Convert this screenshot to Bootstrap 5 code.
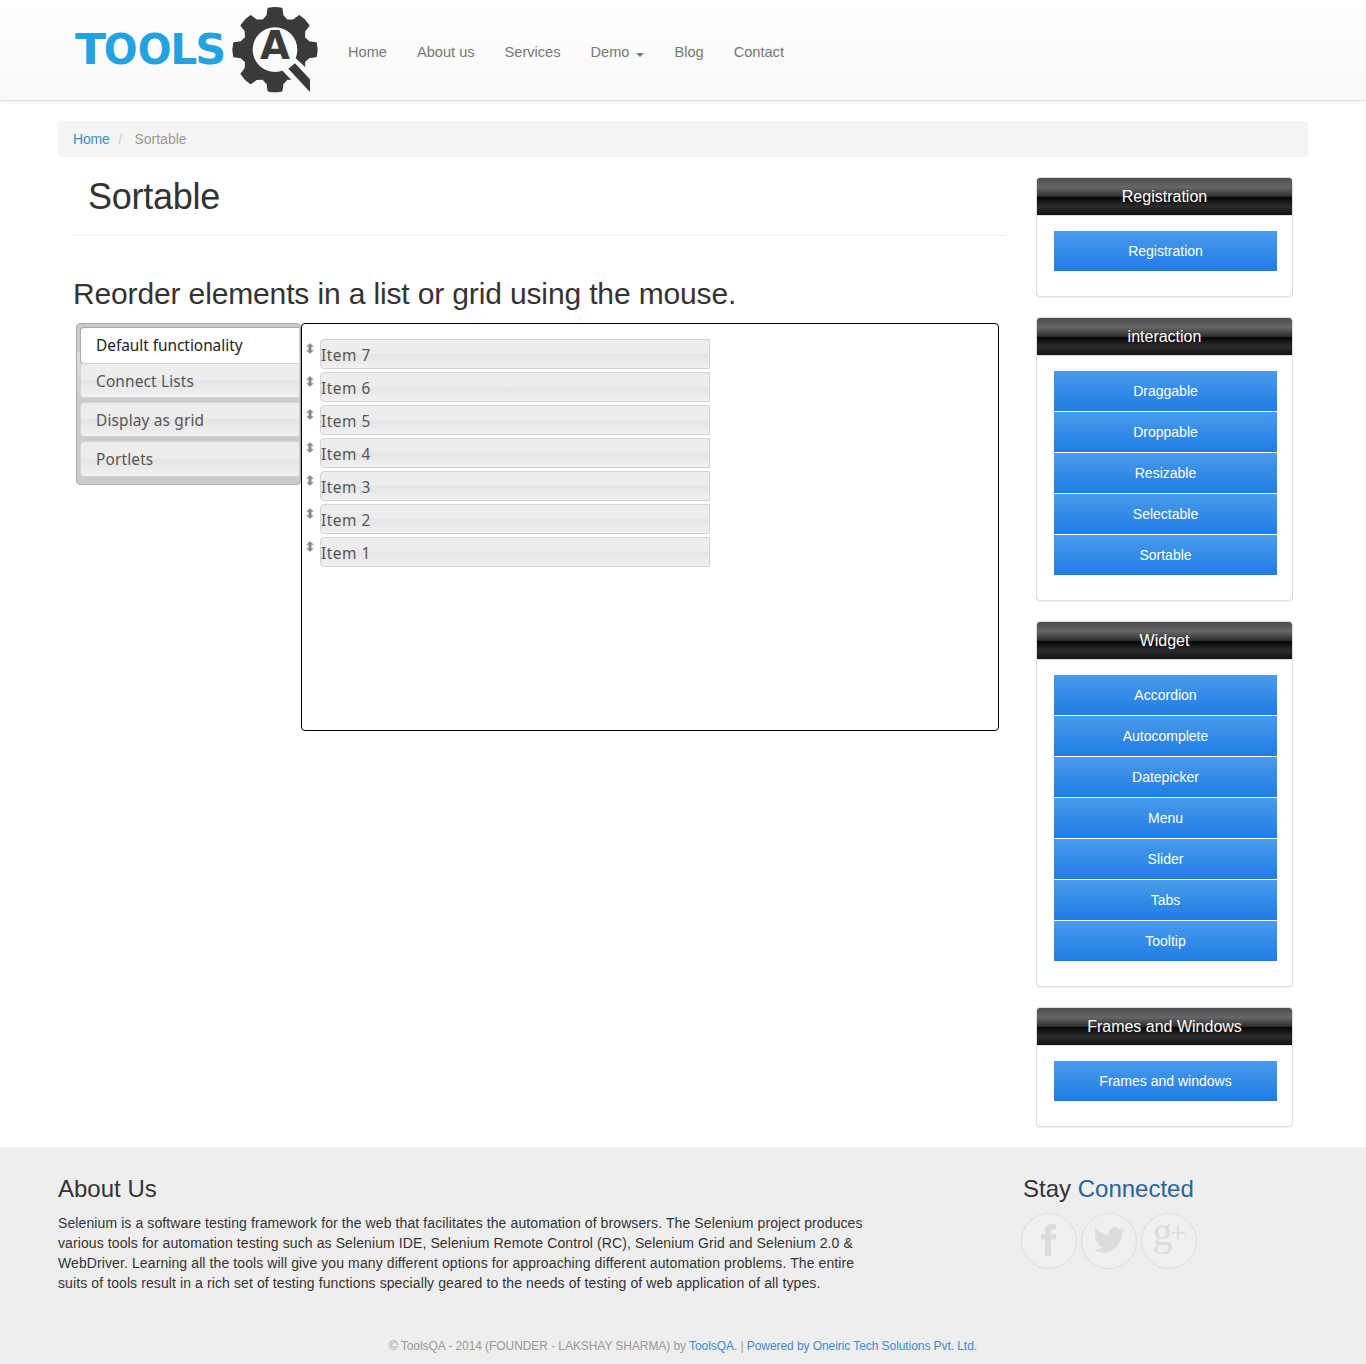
<!DOCTYPE html>
<html lang="en">
<head>
<meta charset="utf-8">
<meta name="viewport" content="width=device-width, initial-scale=1">
<title>Sortable | ToolsQA</title>
<link rel="stylesheet" href="https://cdn.jsdelivr.net/npm/bootstrap@5.3.0/dist/css/bootstrap.min.css">
<style>
body{font-family:"Liberation Sans",Arial,sans-serif;font-size:14px;line-height:20px;color:#333;background:#fff}
a{text-decoration:none;color:#428bca}
.site-head{height:101px;padding:0;background:linear-gradient(#fff,#f8f8f8);border-bottom:1px solid #e4e4e4;box-shadow:0 1px 4px rgba(0,0,0,.08);align-items:flex-start}
.site-head .navbar-brand{margin:0 0 0 60px;padding:0}
.site-head .navbar-brand svg{display:block}
.site-head .navbar-nav{padding-top:42px;gap:30px;margin-left:8px}
.site-head .nav-link{padding:0!important;font-size:14.6px;line-height:20px;color:#777}
.site-head .dropdown-toggle::after{border-top:4px solid;border-left:4px solid transparent;border-right:4px solid transparent;margin-left:7px;vertical-align:0}
.page-wrap{width:1250px;margin:20px auto 0}
.crumbs{height:36px;background:#f4f4f4;border-radius:4px;padding:8px 15px;margin:0}
.crumbs .breadcrumb-item:first-child{letter-spacing:-.2px}
.crumbs .breadcrumb-item.active{color:#999;padding-left:9px}
.crumbs .breadcrumb-item.active::before{color:#ccc;padding-right:12px}
.main-col{width:933px;margin-left:15px}
.main-col h1{font-size:36px;line-height:40px;margin:20px 0 0 15px;height:58px;letter-spacing:-.25px}
.main-col h2{font-size:30px;line-height:36px;margin:0;height:47px;letter-spacing:-.14px}
.title-rule{border-top:1px solid #eee;margin-bottom:40px}
.demo-row{margin-left:3px}
.demo-tabs{width:225px;height:162px;border:1px solid #aaa;border-radius:4px;padding:3px 1px 0 3px;background:linear-gradient(#cbcbcb 0,#cbcbcb 28px,#dedede 29px,#ccc 75px,#cbcbcb);font-family:"Noto Sans",Verdana,sans-serif;font-size:15.4px}
.demo-tabs .nav-link{height:35px;margin-bottom:4px;padding:0 0 0 15px;border-radius:4px 0 0 4px;border:1px solid #d3d3d3;border-right:0;color:#555;background:linear-gradient(#ededed 0,#ededed 48%,#e4e4e4 50%,#f1f1f1);letter-spacing:.16px;line-height:36px}
.demo-tabs .nav-link.active{height:37px;margin-bottom:-1px;color:#212121;background:#fff;border-color:#aaa;letter-spacing:-.02px}
.demo-tabs .nav-link:last-child{height:36px}
.demo-panel{width:698px;height:408px;border:1px solid #000;border-radius:4px;padding:15px 0 0 3px;font-family:"Noto Sans",Verdana,sans-serif;font-size:15.4px;letter-spacing:.55px}
.sort-list{gap:3px;width:405px}
.sort-row{height:30px;gap:5px}
.sort-row svg{margin-top:4px;flex:none}
.sort-item{flex:1;height:30px;padding:0;border:1px solid #d3d3d3;border-radius:4px 0 0 4px;line-height:32px;color:#555;background:linear-gradient(#ededed 0,#ededed 48%,#e4e4e4 50%,#f1f1f1);overflow:hidden}
.side-col{width:257px;margin:20px 15px 0 0;gap:20px}
.side-col .card{border:1px solid #ddd;border-radius:4px;box-shadow:0 1px 1px rgba(0,0,0,.05);height:auto}
.side-col .card-header{height:38px;padding:0;text-align:center;color:#fff;font-size:16px;line-height:38px;border-bottom:1px solid #ddd;border-radius:3px 3px 0 0;background:linear-gradient(#4c4c4c 0,#595959 12%,#666 25%,#474747 39%,#2c2c2c 50%,#000 51%,#111 60%,#2b2b2b 76%,#1c1c1c 91%,#131313 100%)}
.side-col .card-body{padding:15px 15px 25px 17px}
.side-col .list-group{gap:1px;border-radius:0}
.side-col .list-group-item{border:0;height:40px;padding:0;line-height:40px;text-align:center;color:#fff;background:linear-gradient(#499bea,#207ce5)}
.site-foot{margin-top:20px;height:217px;background:#eee}
.site-foot h3{font-size:24px;line-height:26px;margin:0;padding-top:29px}
.foot-inner{width:1250px;margin:0 auto;height:189px}
.about{width:965px}
.about p{width:820px;margin:11px 0 0;letter-spacing:.1px;white-space:nowrap}
.connected{color:#2a6496}
.social{gap:4px;margin:11px 0 0 -2px}
.social svg{display:block;overflow:visible}
.copyright{font-size:12px;line-height:20px;color:#999;text-align:center;margin:0;white-space:nowrap;letter-spacing:-.07px}
</style>
</head>
<body>
<nav class="navbar navbar-expand site-head">
  <a class="navbar-brand" href="#">
    <svg width="280" height="100" viewBox="0 0 840 300" role="img">
      <g fill="#22a2df" font-family="'DejaVu Sans Condensed','DejaVu Sans',sans-serif" font-weight="700" font-size="126">
        <text y="192" transform="translate(45 0) scale(1.2 1)">T</text>
        <text y="192" transform="translate(131 0) scale(1.05 1)">O</text>
        <text y="192" transform="translate(233 0) scale(1.05 1)">O</text>
        <text y="192" transform="translate(331 0) scale(1.12 1)">L</text>
        <text y="192" transform="translate(406 0) scale(1.14 1)">S</text>
      </g>
      <defs>
        <path id="tooth" d="M625 26Q645 21 665 26L668 47L680 60H610L622 47Z"/>
        <mask id="lens" maskUnits="userSpaceOnUse" x="500" y="0" width="300" height="300">
          <rect x="500" width="300" height="300" fill="#fff"/>
          <circle cx="645" cy="149" r="67" fill="#000"/>
          <path d="M666 211L694 240L762 312L800 265L738 203L706 174Z" fill="#000"/>
        </mask>
      </defs>
      <g fill="#3a3a38" stroke="#3a3a38" stroke-width="5" stroke-linejoin="round" mask="url(#lens)">
        <circle cx="645" cy="149" r="93"/>
        <use href="#tooth"/><use href="#tooth" transform="rotate(45 645 149)"/><use href="#tooth" transform="rotate(90 645 149)"/><use href="#tooth" transform="rotate(135 645 149)"/><use href="#tooth" transform="rotate(180 645 149)"/><use href="#tooth" transform="rotate(225 645 149)"/><use href="#tooth" transform="rotate(270 645 149)"/><use href="#tooth" transform="rotate(315 645 149)"/>
      </g>
      <path d="M705 190L750 238V276L685 206Z" fill="#3a3a38"/>
      <text x="645" y="177" text-anchor="middle" font-family="DejaVu Sans,sans-serif" font-weight="700" font-size="116" fill="#3a3a38">A</text>
    </svg>
  </a>
  <div class="navbar-nav">
    <a class="nav-link" href="#">Home</a>
    <a class="nav-link" href="#">About us</a>
    <a class="nav-link" href="#">Services</a>
    <a class="nav-link dropdown-toggle" href="#">Demo</a>
    <a class="nav-link" href="#">Blog</a>
    <a class="nav-link" href="#">Contact</a>
  </div>
</nav>

<div class="page-wrap">
  <ol class="breadcrumb crumbs">
    <li class="breadcrumb-item"><a href="#">Home</a></li>
    <li class="breadcrumb-item active">Sortable</li>
  </ol>
  <div class="d-flex justify-content-between align-items-start">
    <main class="main-col">
      <h1 class="fw-normal">Sortable</h1>
      <div class="title-rule"></div>
      <h2 class="fw-normal text-nowrap">Reorder elements in a list or grid using the mouse.</h2>
      <div class="demo-row d-flex align-items-start">
        <div class="nav flex-column flex-nowrap demo-tabs">
          <a class="nav-link active" href="#">Default functionality</a>
          <a class="nav-link" href="#">Connect Lists</a>
          <a class="nav-link" href="#">Display as grid</a>
          <a class="nav-link" href="#">Portlets</a>
        </div>
        <div class="demo-panel">
          <svg class="d-none"><symbol id="updown" viewBox="0 0 10 11"><path d="M5 .5L8.300 3.600H6.200V7.400H8.300L5 10.500L1.700 7.400H3.800V3.600H1.700Z" fill="#888" stroke="#888" stroke-width=".5"/></symbol></svg>
          <div class="d-flex flex-column sort-list">
            <div class="d-flex sort-row"><svg width="10" height="11"><use href="#updown"/></svg><div class="sort-item">Item 7</div></div>
            <div class="d-flex sort-row"><svg width="10" height="11"><use href="#updown"/></svg><div class="sort-item">Item 6</div></div>
            <div class="d-flex sort-row"><svg width="10" height="11"><use href="#updown"/></svg><div class="sort-item">Item 5</div></div>
            <div class="d-flex sort-row"><svg width="10" height="11"><use href="#updown"/></svg><div class="sort-item">Item 4</div></div>
            <div class="d-flex sort-row"><svg width="10" height="11"><use href="#updown"/></svg><div class="sort-item">Item 3</div></div>
            <div class="d-flex sort-row"><svg width="10" height="11"><use href="#updown"/></svg><div class="sort-item">Item 2</div></div>
            <div class="d-flex sort-row"><svg width="10" height="11"><use href="#updown"/></svg><div class="sort-item">Item 1</div></div>
          </div>
        </div>
      </div>
    </main>
    <aside class="side-col d-flex flex-column">
      <div class="card"><div class="card-header">Registration</div><div class="card-body"><div class="list-group">
        <a class="list-group-item" href="#">Registration</a></div></div></div>
      <div class="card"><div class="card-header">interaction</div><div class="card-body"><div class="list-group">
        <a class="list-group-item" href="#">Draggable</a><a class="list-group-item" href="#">Droppable</a><a class="list-group-item" href="#">Resizable</a><a class="list-group-item" href="#">Selectable</a><a class="list-group-item" href="#">Sortable</a></div></div></div>
      <div class="card"><div class="card-header">Widget</div><div class="card-body"><div class="list-group">
        <a class="list-group-item" href="#">Accordion</a><a class="list-group-item" href="#">Autocomplete</a><a class="list-group-item" href="#">Datepicker</a><a class="list-group-item" href="#">Menu</a><a class="list-group-item" href="#">Slider</a><a class="list-group-item" href="#">Tabs</a><a class="list-group-item" href="#">Tooltip</a></div></div></div>
      <div class="card"><div class="card-header">Frames and Windows</div><div class="card-body"><div class="list-group">
        <a class="list-group-item" href="#">Frames and windows</a></div></div></div>
    </aside>
  </div>
</div>

<footer class="site-foot">
  <div class="foot-inner d-flex">
    <div class="about">
      <h3 class="fw-normal">About Us</h3>
      <p>Selenium is a software testing framework for the web that facilitates the automation of browsers. The Selenium project produces<br>various tools for automation testing such as Selenium IDE, Selenium Remote Control (RC), Selenium Grid and Selenium 2.0 &amp;<br>WebDriver. Learning all the tools will give you many different options for approaching different automation problems. The entire<br>suits of tools result in a rich set of testing functions specially geared to the needs of testing of web application of all types.</p>
    </div>
    <div>
      <h3 class="fw-normal">Stay <span class="connected">Connected</span></h3>
      <div class="d-flex social">
        <svg width="56" height="56"><circle cx="28" cy="28" r="27.5" fill="#f0f0f0" stroke="#ddd"/><path d="M35 11V16.500H32Q30 16.500 30 18.500V21H35V26.500H30V42.500H24V26.500H20V21H24V17.500Q24 11 30.500 11Z" fill="#dcdcdc"/></svg>
        <svg width="56" height="56"><circle cx="28" cy="28" r="27.500" fill="#f0f0f0" stroke="#ddd"/><path transform="translate(12.500 10.200) scale(1.960)" d="M5.026 15c6.038 0 9.341-5.003 9.341-9.334q.002-.211-.006-.422A6.700 6.700 0 0 0 16 3.542a6.700 6.700 0 0 1-1.889.518 3.300 3.300 0 0 0 1.447-1.817 6.500 6.500 0 0 1-2.087.793A3.286 3.286 0 0 0 7.875 6.030a9.320 9.320 0 0 1-6.767-3.429 3.290 3.290 0 0 0 1.018 4.382A3.300 3.300 0 0 1 .640 6.575v.045a3.290 3.290 0 0 0 2.632 3.218 3.200 3.200 0 0 1-.865.115 3 3 0 0 1-.614-.057 3.280 3.280 0 0 0 3.067 2.277A6.600 6.600 0 0 1 .780 13.580a6 6 0 0 1-.780-.045A9.340 9.340 0 0 0 5.026 15" fill="#dcdcdc"/></svg>
        <svg width="56" height="56"><circle cx="28" cy="28" r="27.500" fill="#f0f0f0" stroke="#ddd"/><text x="11.500" y="31.500" font-family="Liberation Serif,serif" font-size="40" fill="#dcdcdc">g</text><path d="M37 12.500V27M30 19.800H44" stroke="#dcdcdc" stroke-width="1.800"/></svg>
      </div>
    </div>
  </div>
  <p class="copyright">© ToolsQA - 2014 (FOUNDER - LAKSHAY SHARMA) by <a href="#">ToolsQA.</a> | <a href="#">Powered by Oneiric Tech Solutions Pvt. Ltd.</a></p>
</footer>
<script src="https://cdn.jsdelivr.net/npm/bootstrap@5.3.0/dist/js/bootstrap.bundle.min.js"></script>
</body>
</html>
